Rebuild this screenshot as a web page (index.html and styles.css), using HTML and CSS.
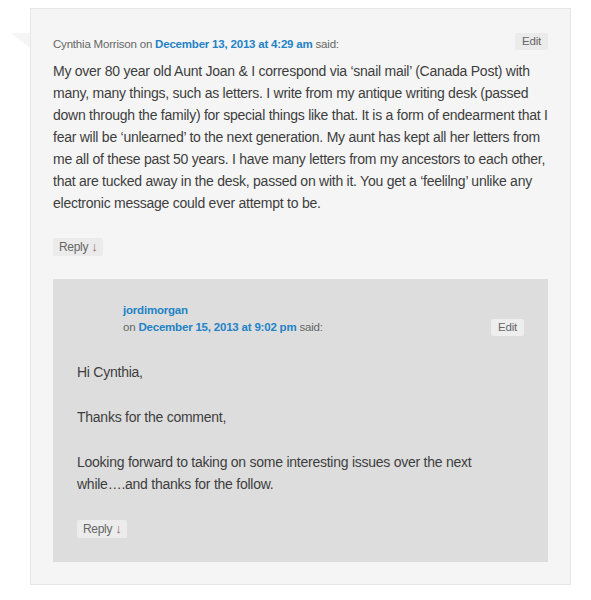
FILE: index.html
```html
<!DOCTYPE html>
<html>
<head>
<meta charset="utf-8">
<link rel="stylesheet" href="styles.css">
</head>
<body>
<div class="card">
  <div class="meta">
    <div class="meta-text">Cynthia Morrison on <a class="link" href="#">December 13, 2013 at 4:29 am</a> said:</div>
    <span class="btn edit">Edit</span>
  </div>
  <div class="content">
    <p>My over 80 year old Aunt Joan &amp; I correspond via ‘snail mail’ (Canada Post) with many, many things, such as letters. I write from my antique writing desk (passed down through the family) for special things like that. It is a form of endearment that I fear will be ‘unlearned’ to the next generation. My aunt has kept all her letters from me all of these past 50 years. I have many letters from my ancestors to each other, that are tucked away in the desk, passed on with it. You get a ‘feelilng’ unlike any electronic message could ever attempt to be.</p>
  </div>
  <span class="btn reply">Reply <span class="arrow">↓</span></span>

  <div class="child">
    <div class="child-meta">
      <div class="child-meta-text">
        <a class="link author" href="#">jordimorgan</a>
        <div>on <a class="link" href="#">December 15, 2013 at 9:02 pm</a> said:</div>
      </div>
      <span class="btn edit">Edit</span>
    </div>
    <div class="child-content">
      <p>Hi Cynthia,</p>
      <p>Thanks for the comment,</p>
      <p>Looking forward to taking on some interesting issues over the next while….and thanks for the follow.</p>
    </div>
    <span class="btn reply">Reply <span class="arrow">↓</span></span>
  </div>
</div>
</body>
</html>
```

FILE: styles.css
```css
html, body {
  margin: 0;
  padding: 0;
  background: #ffffff;
}
body {
  font-family: "Liberation Sans", Arial, sans-serif;
  color: #3d3d3d;
}
.card {
  position: relative;
  margin: 8px 0 0 30px;
  width: 495px;
  padding: 24px 22px 22px 22px;
  background: #f5f5f5;
  border: 1px solid #e6e6e6;
}
.card::before {
  content: "";
  position: absolute;
  left: -20px;
  top: 24px;
  width: 0;
  height: 0;
  border-top: 15px solid #f5f5f5;
  border-left: 19px solid transparent;
}
.link {
  color: #2382c6;
  font-weight: bold;
  text-decoration: none;
}
.meta {
  display: flex;
  justify-content: space-between;
  align-items: flex-start;
  height: 27px;
}
.meta-text {
  font-size: 11.5px;
  line-height: 16px;
  color: #666;
  padding-top: 3px;
  letter-spacing: -0.2px;
}
.btn {
  display: inline-block;
  background: #ebebeb;
  color: #666;
  font-size: 11.5px;
  border-radius: 2px;
}
.edit {
  width: 33px;
  height: 17px;
  line-height: 17px;
  text-align: center;
  letter-spacing: -0.2px;
}
.content {
  margin-right: -4px;
}
.content p {
  margin: 0;
  font-size: 14px;
  line-height: 22px;
  letter-spacing: -0.25px;
}
.reply {
  display: block;
  width: fit-content;
  margin-top: 24px;
  height: 18px;
  line-height: 18px;
  padding: 0 5px 0 6px;
  font-size: 12px;
  letter-spacing: -0.3px;
}
.arrow {
  color: #8b6b6b;
  font-size: 13px;
  letter-spacing: 0;
}
.child {
  margin-top: 23px;
  background: #dddddd;
  padding: 23px 24px 24px 24px;
}
.child-meta {
  display: flex;
  justify-content: space-between;
  align-items: flex-end;
  padding-left: 46px;
}
.child-meta-text {
  font-size: 11.5px;
  line-height: 17px;
  color: #666;
  letter-spacing: -0.2px;
}
.child-meta .edit {
  background: #eeeeee;
}
.child-content {
  padding-top: 25px;
}
.child-content p {
  margin: 0 0 23px 0;
  font-size: 14px;
  line-height: 22px;
  letter-spacing: -0.25px;
}
.child-content p:last-child {
  margin-bottom: 0;
}
.child .reply {
  margin-top: 25px;
  background: #ececec;
}
```
